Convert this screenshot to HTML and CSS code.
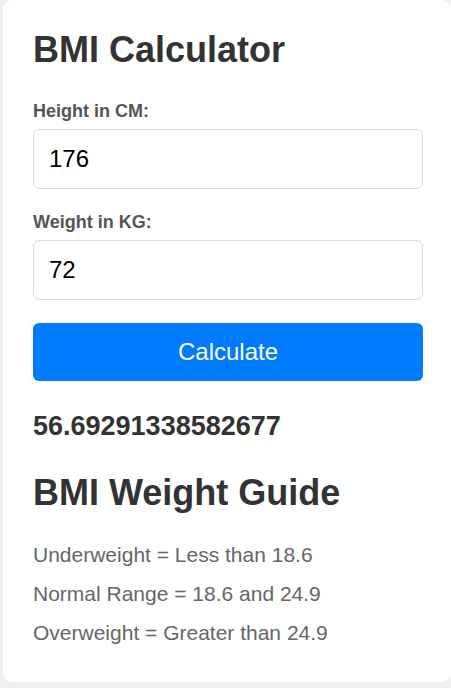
FILE: index.html
```html
<!DOCTYPE html>
<html lang="en">
<head>
<meta charset="utf-8">
<title>BMI Calculator</title>
<link rel="stylesheet" href="styles.css">
</head>
<body>
<div class="card">
  <h1 class="title">BMI Calculator</h1>
  <div class="field">
    <label class="label" for="h">Height in CM:</label>
    <input class="input" id="h" type="text" value="176">
  </div>
  <div class="field">
    <label class="label" for="w">Weight in KG:</label>
    <input class="input" id="w" type="text" value="72">
  </div>
  <button class="btn" type="button">Calculate</button>
  <h3 class="result">56.69291338582677</h3>
  <h2 class="title guide-title">BMI Weight Guide</h2>
  <p class="guide">Underweight = Less than 18.6</p>
  <p class="guide">Normal Range = 18.6 and 24.9</p>
  <p class="guide last">Overweight = Greater than 24.9</p>
</div>
</body>
</html>
```
FILE: styles.css
```css
html, body {
  margin: 0;
  padding: 0;
}
body {
  background: #efefef;
  font-family: "Liberation Sans", Arial, sans-serif;
  padding-left: 3px;
  height: 688px;
  overflow: hidden;
}
.card {
  background: #ffffff;
  width: 448px;
  box-sizing: border-box;
  padding: 30px 28px 37px 30px;
  border-radius: 9px;
}
.title {
  margin: 0 0 30px;
  font-size: 36px;
  line-height: 40px;
  font-weight: bold;
  color: #333333;
}
.field {
  margin-bottom: 22px;
}
.label {
  display: block;
  font-size: 18px;
  line-height: 22px;
  font-weight: bold;
  color: #555555;
  margin-bottom: 7px;
}
.input {
  display: block;
  width: 100%;
  height: 60px;
  box-sizing: border-box;
  border: 1px solid #dddddd;
  border-radius: 6px;
  padding: 0 15px;
  font-family: "Liberation Sans", Arial, sans-serif;
  font-size: 24px;
  color: #000000;
  background: #ffffff;
  outline: none;
}
.btn {
  display: block;
  width: 100%;
  height: 58px;
  margin-top: 23px;
  border: none;
  border-radius: 6px;
  background: #007bff;
  color: #ffffff;
  font-family: "Liberation Sans", Arial, sans-serif;
  font-size: 24px;
  cursor: pointer;
}
.result {
  margin: 29px 0 31px;
  font-size: 27px;
  line-height: 32px;
  font-weight: bold;
  color: #333333;
}
.guide-title {
  margin-bottom: 30px;
}
.guide {
  margin: 0 0 15px;
  font-size: 21px;
  line-height: 24px;
  color: #666666;
}
.guide.last {
  margin-bottom: 0;
}
```
